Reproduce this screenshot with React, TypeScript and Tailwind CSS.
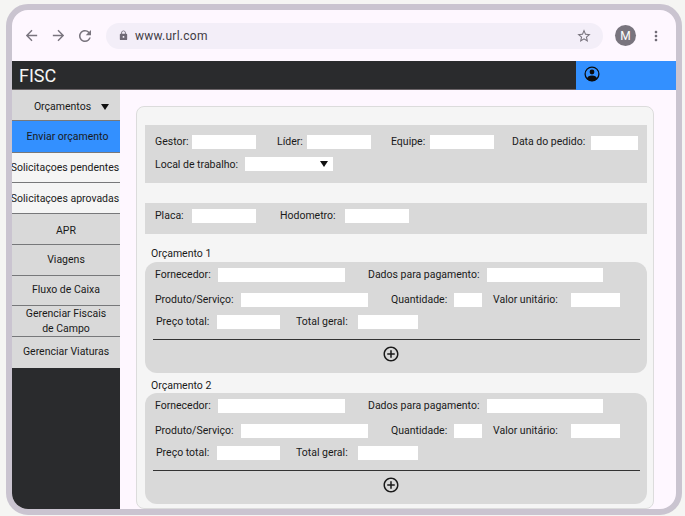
import React from "react";
import { MdArrowBack, MdArrowForward, MdRefresh, MdLock, MdStarBorder, MdMoreVert, MdAddCircleOutline } from "react-icons/md";

function F({ label, lw, w, ml, cls }: { label: string; lw: string; w: string; ml?: string; cls?: string }) {
  return (
    <div className={`flex items-center ${ml ?? ""}`}>
      <span className={`${lw} shrink-0 whitespace-nowrap`}>{label}</span>
      <span className={`${w} h-[14px] shrink-0 bg-white ${cls ?? ""}`} />
    </div>
  );
}

function Budget({ title, titleCls }: { title: string; titleCls: string }) {
  return (
    <div>
      <div className={`pl-[6px] h-[19px] flex items-center text-[#1a1a1a] ${titleCls}`}>{title}</div>
      <div className="h-[111px] rounded-[12px] bg-[#d9d9d9] px-[10px] pt-[6px] flex flex-col">
        <div className="flex h-[14px] items-center">
          <F label="Fornecedor:" lw="w-[63px]" w="w-[127px]" />
          <F label="Dados para pagamento:" lw="w-[119px]" w="w-[116px]" ml="ml-[23px]" />
        </div>
        <div className="flex h-[14px] items-center mt-[11px]">
          <F label="Produto/Serviço:" lw="w-[86px]" w="w-[127px]" />
          <F label="Quantidade:" lw="w-[63px]" w="w-[28px]" ml="ml-[23px]" />
          <F label="Valor unitário:" lw="w-[78px]" w="w-[49px]" ml="ml-[11px]" />
        </div>
        <div className="flex h-[14px] items-center mt-[8px] pl-px">
          <F label="Preço total:" lw="w-[61px]" w="w-[63px]" />
          <F label="Total geral:" lw="w-[62px]" w="w-[60px]" ml="ml-[16px]" />
        </div>
        <div className="h-px bg-[#333] -ml-[2px] mr-[-3px] mt-[10px]" />
        <div className="flex justify-center mt-[5px]">
          <MdAddCircleOutline className="text-[18px] text-[#1a1a1a] mr-[10px]" />
        </div>
      </div>
    </div>
  );
}

function Nav({ children, cls }: { children: React.ReactNode; cls: string }) {
  return (
    <div className={`shrink-0 border-b border-[#77787a] flex items-center justify-center text-center whitespace-nowrap text-[#1a1a1a] ${cls}`}>
      {children}
    </div>
  );
}

export default function App() {
  return (
    <div className="w-[685px] h-[516px] bg-[#f5f5f3] pt-[4px] pl-[6px] pr-[3px] pb-px overflow-hidden font-['Roboto',sans-serif] text-[10.5px] font-[450] leading-[14px]">
      <div className="h-full border-[6px] border-[#cac4d0] rounded-[22px] bg-[#fef7ff] overflow-hidden flex flex-col">
        <div className="h-[51px] shrink-0 flex items-center pl-[11px] text-[#79747e]">
          <MdArrowBack className="text-[17px]" />
          <MdArrowForward className="text-[17px] ml-[10px]" />
          <MdRefresh className="text-[18px] ml-[9px]" />
          <div className="ml-[12px] w-[497px] h-[26px] rounded-full bg-[#f3eef8] flex items-center pl-[12px] pr-[11px]">
            <MdLock className="text-[11px] text-[#6f6a75]" />
            <span className="ml-[6px] text-[12px] font-normal tracking-[0.25px] text-[#3f3b44]">www.url.com</span>
            <MdStarBorder className="ml-auto text-[16px] text-[#79747e]" />
          </div>
          <div className="ml-[12px] w-[21px] h-[21px] rounded-full bg-[#79747e] text-white text-[12px] font-normal flex items-center justify-center">M</div>
          <MdMoreVert className="ml-[12px] text-[16px] text-[#6f6a75]" />
        </div>
        <div className="h-[29px] shrink-0 flex bg-[#2a2b2d] border-b border-[#6b6468]">
          <div className="pl-[7px] text-[18px] font-normal leading-[30px] text-[#f5f5f5] flex-1">FISC</div>
          <div className="w-[100px] h-[29px] bg-[#3390ff] pl-[8px] pt-[5px]">
            <svg width="16" height="16" viewBox="0 0 16 16">
              <defs>
                <clipPath id="acc"><circle cx="8" cy="8" r="7.2" /></clipPath>
              </defs>
              <circle cx="8" cy="8" r="6.9" fill="none" stroke="#0c0c0c" strokeWidth="1.3" />
              <circle cx="8" cy="6" r="2.4" fill="#0c0c0c" />
              <ellipse cx="8" cy="13" rx="5.2" ry="3.6" fill="#0c0c0c" clipPath="url(#acc)" />
            </svg>
          </div>
        </div>
        <div className="flex flex-1 min-h-0">
          <div className="w-[108px] shrink-0 flex flex-col bg-[#2a2b2d] text-[10.5px]">
            <Nav cls="h-[31px] bg-[#d9d9d9] pt-[4px] pl-[11px]">
              <span>Orçamentos</span>
              <span className="ml-[10px] w-0 h-0 border-l-[4px] border-r-[4px] border-t-[6px] border-l-transparent border-r-transparent border-t-[#111]" />
            </Nav>
            <Nav cls="h-[32px] bg-[#3390ff] pt-[1px] pl-[3px]">Enviar orçamento</Nav>
            <Nav cls="h-[30px] bg-[#f5f5f5] pr-[2px]">Solicitaçoes pendentes</Nav>
            <Nav cls="h-[31px] bg-[#f5f5f5] pt-[2px] pr-[2px]">Solicitaçoes aprovadas</Nav>
            <Nav cls="h-[31px] bg-[#d9d9d9] pt-[4px]">APR</Nav>
            <Nav cls="h-[31px] bg-[#d9d9d9]">Viagens</Nav>
            <Nav cls="h-[30px] bg-[#d9d9d9] pb-[1px]">Fluxo de Caixa</Nav>
            <Nav cls="h-[31px] bg-[#d9d9d9] whitespace-normal leading-[15px]">Gerenciar Fiscais<br />de Campo</Nav>
            <div className="h-[31px] bg-[#d9d9d9] pb-[2px] flex items-center justify-center text-[#1a1a1a] whitespace-nowrap">Gerenciar Viaturas</div>
          </div>
          <div className="flex-1 min-w-0 pt-[16px] pl-[16px] pr-[22px] overflow-hidden">
            <div className="h-[403px] rounded-[8px] border border-[#dcdcdc] bg-[#f5f5f5] pl-[8px] pr-[6px] pt-[18px] text-[#1a1a1a]">
              <div className="h-[58px] bg-[#d9d9d9] pl-[10px] pt-[10px]">
                <div className="flex h-[14px] items-center">
                  <F label="Gestor:" lw="w-[37px]" w="w-[64px]" />
                  <F label="Líder:" lw="w-[30px]" w="w-[64px]" ml="ml-[21px]" />
                  <F label="Equipe:" lw="w-[39px]" w="w-[64px]" ml="ml-[20px]" />
                  <F label="Data do pedido:" lw="w-[79px]" w="w-[47px]" ml="ml-[18px]" cls="mt-[2px]" />
                </div>
                <div className="flex h-[14px] items-center mt-[8px]">
                  <span className="w-[90px] shrink-0 pt-[1px]">Local de trabalho:</span>
                  <span className="w-[88px] h-[14px] bg-white flex items-center justify-end pr-[5px]">
                    <span className="w-0 h-0 border-l-[4px] border-r-[4px] border-t-[6px] border-l-transparent border-r-transparent border-t-[#111]" />
                  </span>
                </div>
              </div>
              <div className="mt-[20px] h-[31px] bg-[#d9d9d9] pl-[10px] pt-[6px]">
                <div className="flex h-[14px] items-center">
                  <F label="Placa:" lw="w-[37px]" w="w-[64px]" />
                  <F label="Hodometro:" lw="w-[65px]" w="w-[64px]" ml="ml-[24px]" />
                </div>
              </div>
              <div className="mt-[9px]"><Budget title="Orçamento 1" titleCls="pt-[2px]" /></div>
              <div className="mt-[1px]"><Budget title="Orçamento 2" titleCls="pt-[4px]" /></div>
            </div>
          </div>
        </div>
      </div>
    </div>
  );
}
